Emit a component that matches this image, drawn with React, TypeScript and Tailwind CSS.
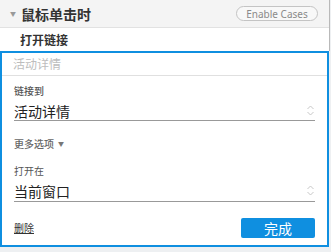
import React from "react";

const Chev = () => (
  <svg width="9" height="13" viewBox="0 0 9 13" fill="none" stroke="#c8c8c8" strokeWidth="1">
    <path d="M1.5 5 L4.5 2 L7.5 5" />
    <path d="M1.5 8 L4.5 11 L7.5 8" />
  </svg>
);

export default function App() {
  const font = { fontFamily: '"Noto Sans CJK SC", "Noto Sans", sans-serif' };
  return (
    <div className="w-[331px] h-[252px] bg-[#eef0f2] overflow-hidden" style={font}>
      <div className="w-[330px] border-r border-[#b9b9b9] bg-white">
        <div className="h-[28px] bg-[#f4f4f4] border-b border-[#e2e2e2] flex items-center pl-[10px] pr-[11px]">
          <span className="text-[6px] text-[#999] mr-[5px] leading-none">▼</span>
          <span className="text-[14px] font-bold text-[#333] leading-[18px]">鼠标单击时</span>
          <div className="ml-auto w-[82px] h-[15px] rounded-full border border-[#c4c4c4] bg-[#f8f8f8] flex items-center justify-center text-[10px] text-[#8a8a8a] leading-none" style={{ fontFamily: '"Noto Sans", sans-serif' }}>
            Enable Cases
          </div>
        </div>
        <div className="h-[23px] flex items-center pl-[20px]">
          <span className="text-[12px] font-bold text-[#333] leading-[16px]">打开链接</span>
        </div>
      </div>
      <div className="w-[329px] h-[196px] border-2 border-[#0f8fe0] bg-white flex flex-col">
        <div className="h-[23px] border-b border-[#e0e0e0] flex items-center pl-[11px] text-[12px] text-[#bdbdbd]">
          活动详情
        </div>
        <div className="px-[12px] flex flex-col">
          <div className="mt-[8px] text-[10px] leading-[14px] text-[#555] font-medium">链接到</div>
          <div className="pt-[4px] flex items-center justify-between border-b border-[#999]">
            <span className="text-[14px] leading-[18px] text-[#222]">活动详情</span>
            <span className="mb-[1px]"><Chev /></span>
          </div>
          <div className="mt-[16px] text-[10px] leading-[14px] text-[#666] font-medium flex items-center">
            更多选项<span className="ml-[4px] text-[6px] text-[#777]">▼</span>
          </div>
          <div className="mt-[13px] text-[10px] leading-[14px] text-[#555]">打开在</div>
          <div className="pt-[4px] pb-[1px] flex items-center justify-between border-b border-[#999]">
            <span className="text-[14px] leading-[18px] text-[#222]">当前窗口</span>
            <span className="mb-[1px]"><Chev /></span>
          </div>
          <div className="mt-[16px] flex items-center justify-between">
            <span className="text-[10px] leading-[14px] text-[#333] underline">删除</span>
            <button className="w-[74px] h-[20px] rounded-[2px] bg-[#0f8fe0] text-white text-[14px] leading-none flex items-center justify-center">
              完成
            </button>
          </div>
        </div>
      </div>
    </div>
  );
}
